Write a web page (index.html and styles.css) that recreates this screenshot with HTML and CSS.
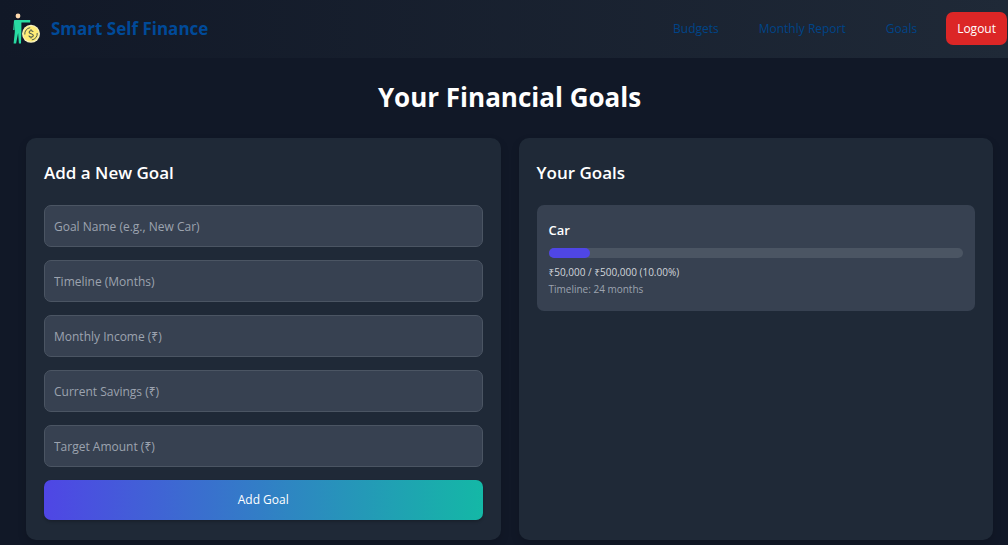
FILE: index.html
```html
<!DOCTYPE html>
<html lang="en">
<head>
<meta charset="utf-8">
<meta name="viewport" content="width=device-width, initial-scale=1">
<title>Smart Self Finance</title>
<link rel="stylesheet" href="styles.css">
</head>
<body>
<header class="navbar">
  <a class="brand" href="#">
    <svg class="brand-logo" viewBox="0 0 28 32" aria-hidden="true">
      <circle cx="6" cy="3" r="2.4" fill="#ffd9ae"/>
      <path d="M2 7.6 Q2 7 3 7 H18.2 V9.4 H9.4 V18 L9 30.5 H6.9 L6.1 20 L4.1 30.5 H1.6 L2.8 19 V9.4 L2.4 17 H1.2 Z" fill="#28dba2"/>
      <circle cx="19" cy="20.8" r="9" fill="#f6f0c0"/>
      <circle cx="19" cy="20.8" r="7.8" fill="#ffed76"/>
      <path d="M12.8 21.5 A6.2 6.2 0 0 1 18.2 14.7 M25.2 20 A6.2 6.2 0 0 1 19.8 26.9" fill="none" stroke="#4d5b50" stroke-width="1"/>
      <path d="M21.2 18.9 C20.7 17.2 17.1 17.3 17.1 19.2 C17.1 21.2 21.3 20.4 21.3 22.6 C21.3 24.6 17.3 24.6 16.8 22.6 M19 16.2 V17.7 M19 24 V25.6" fill="none" stroke="#4d5b50" stroke-width="1.1"/>
    </svg>
    <span>Smart Self Finance</span>
  </a>
  <nav class="nav-links">
    <a href="#">Budgets</a>
    <a href="#">Monthly Report</a>
    <a href="#">Goals</a>
    <button class="logout" type="button">Logout</button>
  </nav>
</header>
<main class="page">
  <h1 class="page-title">Your Financial Goals</h1>
  <div class="panels">
    <section class="panel">
      <h2 class="panel-title">Add a New Goal</h2>
      <form class="goal-form">
        <input class="field" type="text" aria-label="Goal Name" placeholder="Goal Name (e.g., New Car)">
        <input class="field" type="text" aria-label="Timeline in months" placeholder="Timeline (Months)">
        <input class="field" type="text" aria-label="Monthly Income" placeholder="Monthly Income (₹)">
        <input class="field" type="text" aria-label="Current Savings" placeholder="Current Savings (₹)">
        <input class="field" type="text" aria-label="Target Amount" placeholder="Target Amount (₹)">
        <button class="submit" type="button">Add Goal</button>
      </form>
    </section>
    <section class="panel">
      <h2 class="panel-title">Your Goals</h2>
      <article class="goal">
        <h3 class="goal-name">Car</h3>
        <div class="track"><div class="track-fill" style="width: 10%"></div></div>
        <p class="goal-amount">₹50,000 / ₹500,000 (10.00%)</p>
        <p class="goal-time">Timeline: 24 months</p>
      </article>
    </section>
  </div>
</main>
</body>
</html>
```
FILE: styles.css
```css
* { box-sizing: border-box; }

body {
  margin: 0;
  min-height: 100vh;
  background: #111827;
  color: #fff;
  font-family: "Open Sans", "Noto Sans", sans-serif;
  font-size: 12px;
  line-height: 18px;
}

h1, h2, h3, p { margin: 0; }
button, input { font: inherit; }

.navbar {
  display: flex;
  align-items: center;
  justify-content: space-between;
  padding: 12px 1px 13px 12px;
  background: linear-gradient(to right, #111827, #1f2937);
}

.brand {
  display: flex;
  align-items: center;
  gap: 11px;
  color: #004a99;
  font-size: 17px;
  line-height: 24px;
  font-weight: 700;
  text-decoration: none;
}

.brand-logo { width: 28px; height: 32px; }

.nav-links { display: flex; align-items: center; }
.nav-links a {
  margin-right: 40px;
  color: #004488;
  text-decoration: none;
}
.nav-links a:last-of-type { margin-right: 29px; }

.logout {
  padding: 8px 11px;
  border: 0;
  border-radius: 7px;
  background: #dc2626;
  color: #fff;
  line-height: 17px;
}

.page { padding: 20px 15px 6px 26px; }

.page-title {
  margin-bottom: 22px;
  font-size: 26px;
  line-height: 38px;
  font-weight: 700;
  text-align: center;
}

.panels {
  display: grid;
  grid-template-columns: 1fr 1fr;
  gap: 18px;
}

.panel {
  padding: 20px 18px;
  border-radius: 10px;
  background: #1f2937;
  box-shadow: 0 4px 8px rgba(0, 0, 0, 0.15);
}

.panel-title {
  margin-bottom: 17px;
  font-size: 17px;
  line-height: 30px;
  font-weight: 600;
}

.goal-form { display: flex; flex-direction: column; gap: 13px; }

.field {
  width: 100%;
  height: 42px;
  padding: 0 9px;
  border: 1px solid #4b5563;
  border-radius: 7px;
  background: #374151;
  color: #fff;
}
.field::placeholder { color: #9ca3af; opacity: 1; }

.submit {
  height: 40px;
  border: 0;
  border-radius: 7px;
  background: linear-gradient(to right, #4f46e5, #14b8a6);
  color: #fff;
  box-shadow: 0 2px 3px rgba(0, 0, 0, 0.2);
}

.goal {
  padding: 16px 12px 13px;
  border-radius: 7px;
  background: #374151;
}
.goal-name {
  margin-bottom: 9px;
  font-size: 13px;
  line-height: 18px;
  font-weight: 600;
}
.track {
  height: 10px;
  margin-bottom: 6px;
  border-radius: 5px;
  background: #4b5563;
}
.track-fill { height: 100%; border-radius: 5px; background: #4f46e5; }
.goal-amount, .goal-time { font-size: 10px; line-height: 17px; }
.goal-amount { color: #d1d5db; }
.goal-time { color: #9ca3af; }
```
